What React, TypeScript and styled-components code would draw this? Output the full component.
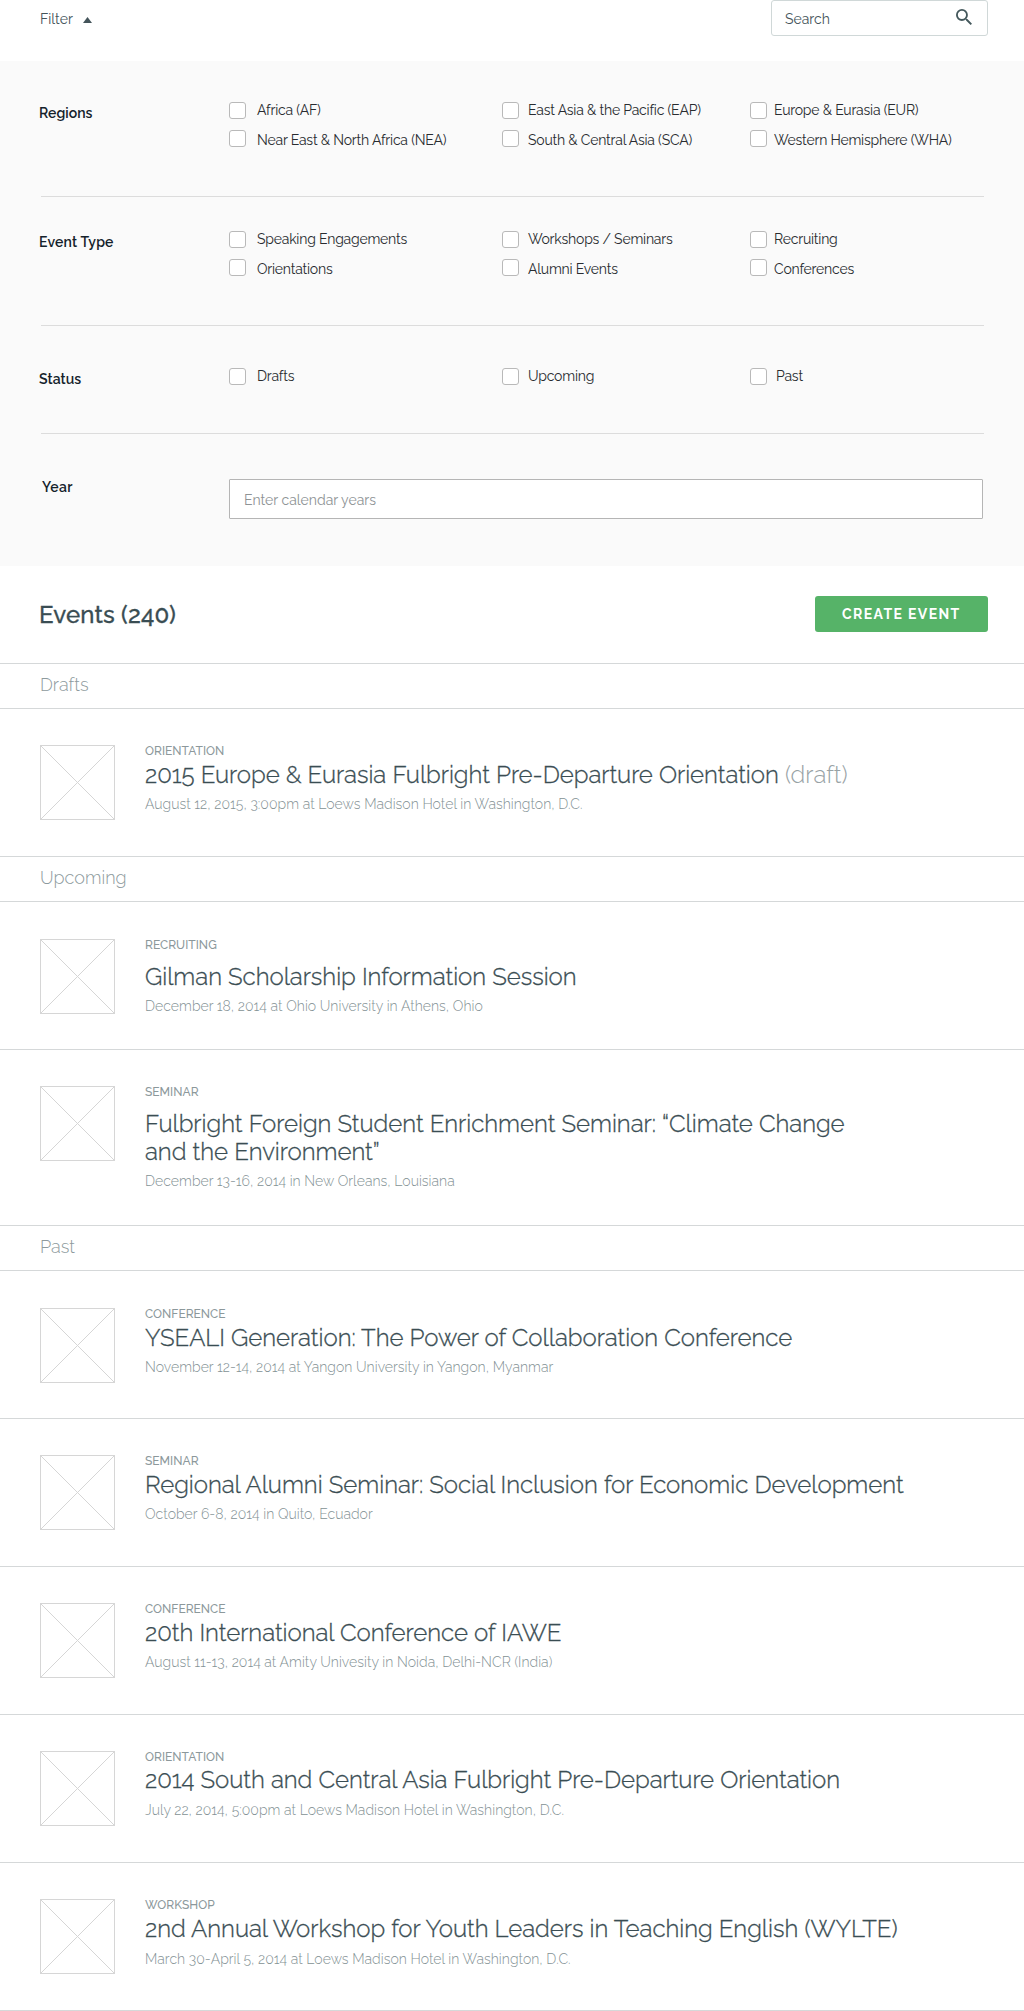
import React from 'react';
import styled, { createGlobalStyle } from 'styled-components';

const GlobalStyle = createGlobalStyle`
  *, *::before, *::after { box-sizing: border-box; }
  body {
    margin: 0;
    background: #fff;
    color: #3a4d53;
    font-family: Raleway, Lato, "Open Sans", sans-serif;
    font-size: 14px;
  }
  h1, h2, h3, p { margin: 0; padding: 0; font-weight: inherit; }
`;

const Page = styled.main`
  width: 1024px;
`;

const TopBar = styled.header`
  display: flex;
  justify-content: space-between;
  height: 61px;
  padding: 0 36px 0 40px;
`;

const FilterToggle = styled.button`
  display: flex;
  align-items: center;
  gap: 10px;
  height: 20px;
  margin-top: 9px;
  padding: 0;
  border: 0;
  background: none;
  color: #44545a;
  font: inherit;
  line-height: 20px;

  svg { margin-top: 2px; }
`;

const SearchBox = styled.div`
  display: flex;
  justify-content: space-between;
  width: 217px;
  height: 36px;
  padding: 8px 15px 0 13px;
  border: 1px solid #d0d8d8;
  border-radius: 3px;
  color: #44545a;
  line-height: 20px;
`;

const FilterPanel = styled.section`
  padding: 0 40px 0 41px;
  background: #fafafa;
`;

const FilterGroup = styled.div<{ $top: number; $bottom: number }>`
  display: grid;
  grid-template-columns: 188px 1fr;
  align-items: start;
  padding: ${(p) => p.$top}px 0 ${(p) => p.$bottom}px;

  & + & { border-top: 1px solid #dcdcdc; }
`;

const GroupLabel = styled.h2<{ $tracking?: number; $shift?: number }>`
  height: 17px;
  margin: 1px 0 0 ${(p) => p.$shift ?? -2}px;
  color: #14222b;
  font-size: 14px;
  font-weight: 600;
  line-height: 20px;
  letter-spacing: ${(p) => p.$tracking ?? 0.05}px;
`;

const YearLabel = styled(GroupLabel)`
  margin-top: -2px;
`;

const Options = styled.div`
  display: grid;
  grid-template-columns: 273px 248px 1fr;
  grid-auto-rows: 17px;
  row-gap: 11px;
`;

const Option = styled.label<{ $gap: number; $drop: boolean }>`
  display: flex;
  gap: ${(p) => p.$gap}px;
  color: #292c30;
  line-height: 16px;
  letter-spacing: -0.21px;
  white-space: nowrap;

  span { padding-top: ${(p) => (p.$drop ? 2 : 0)}px; }
`;

const Checkbox = styled.input`
  appearance: none;
  flex: none;
  width: 17px;
  height: 17px;
  margin: 0;
  border: 1px solid #b9b9b9;
  border-radius: 3px;
  background: #fff;
`;

const YearInput = styled.input`
  width: 754px;
  height: 40px;
  padding: 1px 14px 0;
  border: 1px solid #b5b5b5;
  border-radius: 1px;
  background: #fff;
  font: inherit;

  &::placeholder { color: #8e9395; opacity: 1; }
`;

const ListHeader = styled.header`
  display: flex;
  justify-content: space-between;
  align-items: flex-start;
  height: 97px;
  padding: 30px 36px 0 39px;
`;

const Title = styled.h1`
  margin-top: 5px;
  font-size: 24px;
  font-weight: 500;
  line-height: 28px;
  letter-spacing: 0.13px;
  -webkit-text-stroke: 0.3px currentColor;
`;

const CreateButton = styled.button`
  width: 173px;
  height: 36px;
  padding: 0 0 0 27px;
  border: 0;
  border-radius: 3px;
  background: #56b368;
  color: #fff;
  font: 700 14px/36px Raleway, Lato, sans-serif;
  letter-spacing: 1.4px;
  text-align: left;
`;

const SectionTitle = styled.h2`
  height: 46px;
  padding: 11px 39px 0 40px;
  border: solid #d5d8d9;
  border-width: 1px 0;
  color: #8d9a9d;
  font-size: 18px;
  font-weight: 300;
  line-height: 20px;
`;

const EventRow = styled.article<{ $nudge: number }>`
  display: grid;
  grid-template-columns: 75px 1fr;
  column-gap: 30px;
  align-items: start;
  padding: ${(p) => 36 + p.$nudge}px 40px ${(p) => 36 - p.$nudge}px;

  & + & { border-top: 1px solid #d5d8d9; }
`;

const EventList = styled.div`
  border-bottom: 1px solid #d5d8d9;
`;

const EventBody = styled.div`
  margin-top: -1px;
`;

const Kicker = styled.p`
  color: #8c989b;
  font-size: 12px;
  font-weight: 500;
  line-height: 14px;
  letter-spacing: 0.02px;
  text-transform: uppercase;
`;

const EventTitle = styled.h3<{ $gap: number }>`
  margin-top: ${(p) => p.$gap}px;
  font-size: 24px;
  font-weight: 300;
  line-height: 28px;
  letter-spacing: -0.02px;
  white-space: pre-line;
  -webkit-text-stroke: 0.3px currentColor;

  em {
    color: #98a2a5;
    font-style: normal;
    -webkit-text-stroke: 0;
  }
`;

const Meta = styled.p<{ $gap: number }>`
  height: 16px;
  margin-top: ${(p) => p.$gap}px;
  color: #839194;
  font-weight: 300;
  line-height: 16px;
  letter-spacing: 0.04px;
`;

const Thumb = () => (
  <svg width="75" height="75" viewBox="0 0 75 75" fill="none" stroke="#d6d6d6">
    <rect x="0.5" y="0.5" width="74" height="74" />
    <path d="M0.5 0.5l74 74M74.5 0.5l-74 74" />
  </svg>
);

const optionGaps = [11, 9, 7];

const OptionGrid = ({ items, lastShift = 0 }: { items: string[]; lastShift?: number }) => (
  <Options>
    {items.map((item, i) => (
      <Option
        key={item}
        $gap={optionGaps[i % 3] + (i === items.length - 1 ? lastShift : 0)}
        $drop={i > 2}
      >
        <Checkbox type="checkbox" />
        <span>{item}</span>
      </Option>
    ))}
  </Options>
);

type EventItem = {
  kind: string;
  title: string;
  meta: string;
  draft?: boolean;
  nudge?: number;
  titleGap?: number;
  metaGap?: number;
};

const sections: { name: string; events: EventItem[] }[] = [
  {
    name: 'Drafts',
    events: [
      {
        kind: 'Orientation',
        title: '2015 Europe & Eurasia Fulbright Pre-Departure Orientation',
        meta: 'August 12, 2015, 3:00pm at Loews Madison Hotel in Washington, D.C.',
        draft: true,
      },
    ],
  },
  {
    name: 'Upcoming',
    events: [
      {
        kind: 'Recruiting',
        title: 'Gilman Scholarship Information Session',
        meta: 'December 18, 2014 at Ohio University in Athens, Ohio',
        nudge: 1,
        titleGap: 11,
      },
      {
        kind: 'Seminar',
        title: 'Fulbright Foreign Student Enrichment Seminar: “Climate Change\nand the Environment”',
        meta: 'December 13-16, 2014 in New Orleans, Louisiana',
        titleGap: 11,
      },
    ],
  },
  {
    name: 'Past',
    events: [
      {
        kind: 'Conference',
        title: 'YSEALI Generation: The Power of Collaboration Conference',
        meta: 'November 12-14, 2014 at Yangon University in Yangon, Myanmar',
        nudge: 1,
      },
      {
        kind: 'Seminar',
        title: 'Regional Alumni Seminar: Social Inclusion for Economic Development',
        meta: 'October 6-8, 2014 in Quito, Ecuador',
      },
      {
        kind: 'Conference',
        title: '20th International Conference of IAWE',
        meta: 'August 11-13, 2014 at Amity Univesity in Noida, Delhi-NCR (India)',
      },
      {
        kind: 'Orientation',
        title: '2014 South and Central Asia Fulbright Pre-Departure Orientation',
        meta: 'July 22, 2014, 5:00pm at Loews Madison Hotel in Washington, D.C.',
        titleGap: 2,
        metaGap: 8,
      },
      {
        kind: 'Workshop',
        title: '2nd Annual Workshop for Youth Leaders in Teaching English (WYLTE)',
        meta: 'March 30-April 5, 2014 at Loews Madison Hotel in Washington, D.C.',
        metaGap: 8,
      },
    ],
  },
];

const SectionBlock = styled.section`
  & + & { margin-top: -1px; }
`;

export default function App() {
  return (
    <Page>
      <GlobalStyle />
      <TopBar>
        <FilterToggle>
          Filter
          <svg width="9" height="6" viewBox="0 0 9 6" fill="#44545a">
            <path d="M4.5 0L9 6H0z" />
          </svg>
        </FilterToggle>
        <SearchBox>
          Search
          <svg width="16" height="16" viewBox="3 3 17.5 17.5" fill="#44585c">
            <path d="M15.5 14h-.79l-.28-.27A6.47 6.47 0 0 0 16 9.5 6.5 6.5 0 1 0 9.5 16c1.61 0 3.09-.59 4.23-1.57l.27.28v.79l5 4.99L20.49 19l-4.99-5zm-6 0C7.01 14 5 11.99 5 9.5S7.01 5 9.5 5 14 7.01 14 9.5 11.99 14 9.5 14z" />
          </svg>
        </SearchBox>
      </TopBar>

      <FilterPanel>
        <FilterGroup $top={41} $bottom={49}>
          <GroupLabel>Regions</GroupLabel>
          <OptionGrid
            items={[
              'Africa (AF)',
              'East Asia & the Pacific (EAP)',
              'Europe & Eurasia (EUR)',
              'Near East & North Africa (NEA)',
              'South & Central Asia (SCA)',
              'Western Hemisphere (WHA)',
            ]}
          />
        </FilterGroup>
        <FilterGroup $top={34} $bottom={49}>
          <GroupLabel $tracking={0.17}>Event Type</GroupLabel>
          <OptionGrid
            items={[
              'Speaking Engagements',
              'Workshops / Seminars',
              'Recruiting',
              'Orientations',
              'Alumni Events',
              'Conferences',
            ]}
          />
        </FilterGroup>
        <FilterGroup $top={42} $bottom={47}>
          <GroupLabel>Status</GroupLabel>
          <OptionGrid items={['Drafts', 'Upcoming', 'Past']} lastShift={2} />
        </FilterGroup>
        <FilterGroup $top={45} $bottom={47}>
          <YearLabel $tracking={0.4} $shift={1}>Year</YearLabel>
          <YearInput placeholder="Enter calendar years" />
        </FilterGroup>
      </FilterPanel>

      <ListHeader>
        <Title>Events (240)</Title>
        <CreateButton>CREATE EVENT</CreateButton>
      </ListHeader>

      {sections.map((section) => (
        <SectionBlock key={section.name}>
          <SectionTitle>{section.name}</SectionTitle>
          <EventList>
            {section.events.map((event) => (
              <EventRow key={event.title} $nudge={event.nudge ?? 0}>
                <Thumb />
                <EventBody>
                  <Kicker>{event.kind}</Kicker>
                  <EventTitle $gap={event.titleGap ?? 3}>
                    {event.title}
                    {event.draft && <em> (draft)</em>}
                  </EventTitle>
                  <Meta $gap={event.metaGap ?? 7}>{event.meta}</Meta>
                </EventBody>
              </EventRow>
            ))}
          </EventList>
        </SectionBlock>
      ))}
    </Page>
  );
}
